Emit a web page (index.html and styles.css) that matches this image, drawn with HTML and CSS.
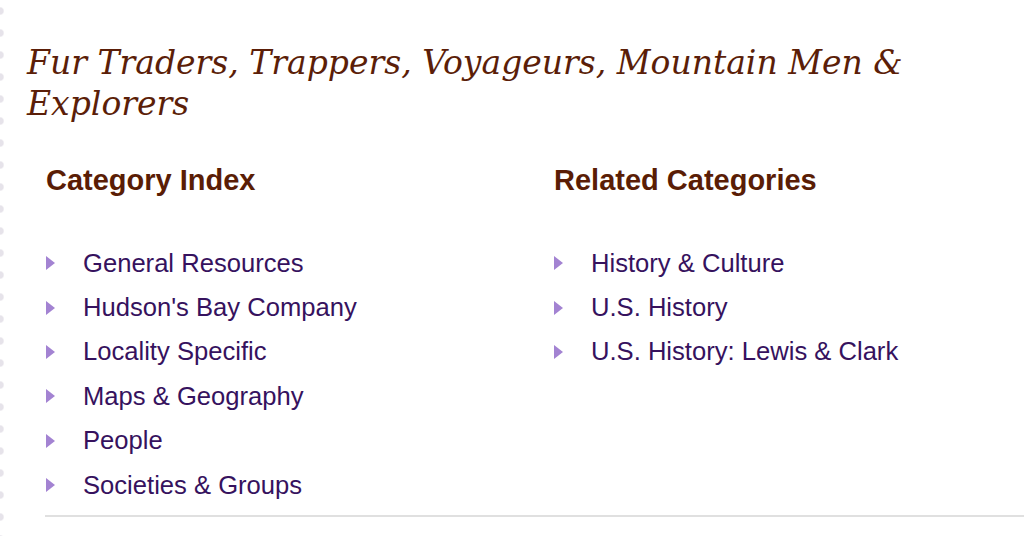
FILE: index.html
```html
<!DOCTYPE html>
<html>
<head>
<meta charset="utf-8">
<link rel="stylesheet" href="styles.css">
</head>
<body>
<div class="edge"></div>
<main class="page">
  <h1 class="title">Fur Traders, Trappers, Voyageurs, Mountain Men &amp; Explorers</h1>
  <div class="cols">
    <section class="col">
      <h2 class="heading">Category Index</h2>
      <ul class="list">
        <li><span class="arrow"></span><a href="#">General Resources</a></li>
        <li><span class="arrow"></span><a href="#">Hudson's Bay Company</a></li>
        <li><span class="arrow"></span><a href="#">Locality Specific</a></li>
        <li><span class="arrow"></span><a href="#">Maps &amp; Geography</a></li>
        <li><span class="arrow"></span><a href="#">People</a></li>
        <li><span class="arrow"></span><a href="#">Societies &amp; Groups</a></li>
      </ul>
    </section>
    <section class="col">
      <h2 class="heading">Related Categories</h2>
      <ul class="list">
        <li><span class="arrow"></span><a href="#">History &amp; Culture</a></li>
        <li><span class="arrow"></span><a href="#">U.S. History</a></li>
        <li><span class="arrow"></span><a href="#">U.S. History: Lewis &amp; Clark</a></li>
      </ul>
    </section>
  </div>
  <hr class="rule">
</main>
</body>
</html>
```
FILE: styles.css
```css
html, body { margin: 0; padding: 0; background: #fff; }
body { width: 1024px; height: 536px; overflow: hidden; position: relative; }
.edge {
  position: absolute; left: 0; top: 0; width: 5px; height: 536px;
  background: radial-gradient(circle at 0 11px, #e6e3ea 0 3px, transparent 4.5px) 0 0 / 5px 22px repeat-y;
}
.page { padding: 42px 0 0 27px; }
.title {
  margin: 0;
  font-family: "DejaVu Serif", Georgia, serif;
  font-style: italic; font-weight: normal;
  font-size: 33px; line-height: 41px;
  color: #5b1e08;
  width: 900px;
}
.cols { display: flex; padding-left: 19px; margin-top: 39px; }
.col { flex: none; width: 508px; }
.heading {
  margin: 0;
  font-family: "Liberation Sans", Arial, sans-serif;
  font-weight: bold; font-size: 29px; line-height: 34px;
  color: #5a1d05;
}
.list { list-style: none; margin: 44px 0 0; padding: 0; }
.list li {
  display: flex; align-items: center;
  height: 44.4px;
  font-family: "Liberation Sans", Arial, sans-serif;
  font-size: 25.6px;
}
.arrow {
  flex: none;
  width: 0; height: 0;
  border-top: 7.5px solid transparent; border-bottom: 7.5px solid transparent;
  border-left: 9px solid #a383d2;
  margin-right: 28px;
}
.list a { color: #36125e; text-decoration: none; }
.rule {
  margin: 0; border: 0; height: 2px; background: #e0e0e0;
  position: absolute; left: 45px; right: 0; top: 515px;
}
```
